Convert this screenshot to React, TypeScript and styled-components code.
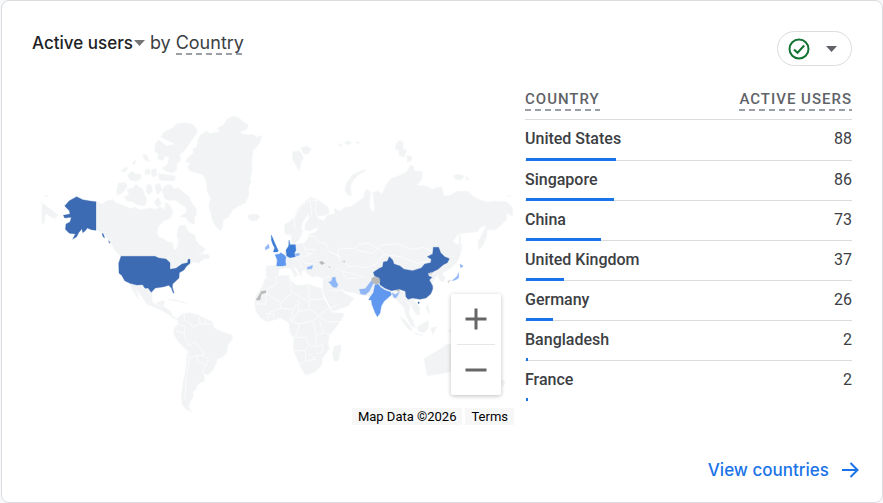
import React from "react";
import styled, { createGlobalStyle } from "styled-components";

const GlobalStyle = createGlobalStyle`
  *, *::before, *::after { box-sizing: border-box; }
  body {
    margin: 0;
    background: #f8f9fa;
    color: #3c4043;
    font-family: Roboto, "Liberation Sans", sans-serif;
  }
  button { font: inherit; color: inherit; background: none; border: 0; padding: 0; cursor: pointer; }
`;

const Card = styled.section`
  display: flex;
  flex-direction: column;
  min-height: 100vh;
  margin-left: 1px;
  background: #fff;
  border: 1px solid #dadce0;
  border-radius: 8px;
`;

const Header = styled.header`
  display: flex;
  justify-content: space-between;
  align-items: flex-start;
  padding: 30px 30px 0;
`;

const Title = styled.h2`
  display: flex;
  align-items: baseline;
  margin: 0;
  font: 400 18px/24px Inter, Roboto, sans-serif;
`;

const MetricButton = styled.button`
  display: flex;
  align-items: center;
  gap: 1px;
  color: #202124;
  font-size: 17px;
  font-weight: 500;
`;

const dashes = (color: string) => `
  background-image: repeating-linear-gradient(90deg, ${color} 0 6px, transparent 6px 10px);
  background-repeat: no-repeat;
  background-position: left bottom;
  background-size: 100% 2px;
`;

const Dimension = styled.span`
  ${dashes("#9aa0a6")}
`;

const By = styled.span`
  margin: 0 5px;
`;

const QualityButton = styled.button`
  display: flex;
  align-items: center;
  justify-content: space-between;
  width: 75px;
  height: 35px;
  padding: 0 14px 0 10px;
  border: 1px solid #dadce0;
  border-radius: 18px;
`;

const Body = styled.div`
  display: grid;
  grid-template-columns: minmax(0, 475fr) minmax(0, 327fr);
  gap: 10px;
  padding: 20px 30px 0 38px;
`;

const MapPanel = styled.div`
  position: relative;
  align-self: start;
  padding-top: 14px;
`;

const MapSvg = styled.svg`
  display: block;
  width: 100%;
`;

const ZoomControls = styled.div`
  position: absolute;
  right: 14px;
  bottom: 30px;
  width: 50px;
  padding: 0 6px;
  background: #fff;
  border-radius: 2px;
  box-shadow: 0 1px 4px rgba(0, 0, 0, 0.25);
`;

const ZoomButton = styled.button`
  display: flex;
  align-items: center;
  justify-content: center;
  width: 100%;
  height: 50px;

  & + & {
    height: 51px;
    border-top: 1px solid #e6e6e6;
  }
`;

const Attribution = styled.div`
  position: absolute;
  right: 1px;
  bottom: 0;
  display: flex;
  gap: 3px;
  color: #000;
  font-size: 13px;
  line-height: 17px;
`;

const AttributionItem = styled.span`
  padding: 0 6px;
  background: #f7f7f7;
`;

const TermsLink = styled.a`
  color: inherit;
  text-decoration: none;
`;

const Table = styled.table`
  width: 100%;
  align-self: start;
  border-collapse: separate;
  border-spacing: 0;
`;

const HeadCell = styled.th<{ $end?: boolean }>`
  height: 34px;
  padding: 0 0 8px;
  border-bottom: 1px solid #dadce0;
  color: #5f6368;
  font-size: 15px;
  font-weight: 500;
  line-height: 16px;
  letter-spacing: 1px;
  text-align: ${(p) => (p.$end ? "right" : "left")};
  vertical-align: bottom;
`;

const HeadLabel = styled.span`
  display: inline-block;
  padding-bottom: 4px;
  ${dashes("#9aa0a6")}
`;

const Row = styled.tr`
  position: relative;

  &:first-child > * { height: 41px; }
  &:last-child > * { border-bottom-color: transparent; }
`;

const NameCell = styled.th`
  height: 40px;
  padding: 0 0 2px;
  border-bottom: 1px solid #dadce0;
  font-size: 16px;
  font-weight: 500;
  line-height: 24px;
  text-align: left;
`;

const ValueCell = styled.td`
  height: 40px;
  padding: 0 0 2px;
  border-bottom: 1px solid #dadce0;
  font-size: 16px;
  line-height: 24px;
  text-align: right;
`;

const Bar = styled.span`
  position: absolute;
  left: 1px;
  bottom: 0;
  height: 3px;
  background: #1a73e8;
`;

const Footer = styled.footer`
  display: flex;
  justify-content: flex-end;
  margin-top: auto;
  padding: 0 23px 20px;
`;

const ViewLink = styled.a`
  display: flex;
  align-items: center;
  gap: 13px;
  color: #1a73e8;
  font: 500 17px/24px Inter, Roboto, sans-serif;
  text-decoration: none;
`;

const rows = [
  { country: "United States", users: 88 },
  { country: "Singapore", users: 86 },
  { country: "China", users: 73 },
  { country: "United Kingdom", users: 37 },
  { country: "Germany", users: 26 },
  { country: "Bangladesh", users: 2 },
  { country: "France", users: 2 },
];
const totalUsers = 320;

const Caret = ({ color = "#757575", width = 11, height = 6 }) => (
  <svg width={width} height={height} viewBox="0 0 12 6" preserveAspectRatio="none" aria-hidden="true">
    <path d="M0 0h12L6 6z" fill={color} />
  </svg>
);

const land = [
  // Greenland and Iceland
  "M505 115L512 105 530 92 540 102 550 98 568 96 562 84 580 75 592 56 612 48 630 56 640 66 655 74 650 88 628 98 645 104 672 104 680 112 695 106 693 120 682 138 670 150 665 180 666 210 660 235 664 245 656 262 656 288 645 310 625 318 608 330 595 352 580 360 577 380 572 392 558 380 548 364 543 340 536 318 542 295 532 275 530 250 520 225 500 218 478 212 472 200 482 190 466 184 475 172 490 160 488 148 500 140z",
  "M652 348L662 343 680 342 690 350 682 360 668 364 658 358z",
  // Canadian Arctic
  "M392 112L402 95 428 84 440 72 465 68 490 73 503 92 498 104 480 128 465 150 450 162 452 180 440 192 440 210 428 218 408 214 396 204 412 194 418 172 405 168 398 182 382 176 386 162 374 155 376 132 385 120 398 128 410 138 436 132z",
  "M272 215L284 202 294 204 286 216zM292 226L306 214 318 222 332 222 334 236 318 244 300 240zM306 188L318 178 314 194zM338 162L350 166 362 186 344 180zM345 210L358 206 362 222 346 224zM364 208L378 206 380 228 366 230zM386 220L408 224 436 228 434 242 408 242 388 240z",
  "M265 250L286 247 292 258 280 276 264 286 259 276zM290 268L310 264 318 252 326 260 338 266 350 300 344 318 322 314 308 306 290 302 284 290 298 284zM350 256L362 252 368 274 356 284 348 276zM374 256L390 250 396 270 382 284z",
  "M396 270L406 256 422 254 432 266 446 264 464 280 478 290 484 306 498 326 500 346 492 350 494 372 478 368 466 352 450 350 470 336 468 322 448 310 436 300 420 302 404 296zM404 340L420 332 426 350 410 358zM372 306L386 292 394 312 384 322z",
  // North America mainland
  "M200 304L215 312 228 304 248 298 258 308 275 314 290 320 300 326 316 322 330 330 358 324 376 328 392 320 404 330 406 306 420 316 430 338 418 356 402 362 386 378 380 396 386 410 404 418 414 426 428 428 432 450 440 446 446 424 440 406 448 376 466 376 476 396 494 404 498 422 508 434 526 446 518 458 500 464 534 462 540 474 520 478 506 490 488 486 478 498 440 512 420 508 375 478 273 470 256 452 242 428 228 410 212 396 200 390z",
  "M298 548L340 556 366 576 366 602 374 614 388 604 404 602 400 618 410 626 422 634 426 646 440 656 432 656 414 642 396 632 374 622 350 612 338 594 318 566 326 598 308 572z",
  "M412 598L440 600 472 610 440 604zM30 306L38 310 58 324 72 336 84 346 74 356 58 348 46 340 44 366 36 374 36 306zM44 288L56 287 50 291z",
  // South America
  "M440 656L456 642 480 638 502 644 526 656 546 664 552 684 572 694 604 704 608 716 594 734 590 758 580 770 562 776 558 792 546 814 534 826 522 820 524 842 504 852 496 870 488 874 490 890 480 906 476 922 486 936 470 930 456 912 454 888 458 852 466 818 470 780 472 752 448 728 430 702 434 682 446 672z",
  // Africa and Madagascar
  "M704 538L740 528 778 526 782 542 800 556 816 556 834 552 862 562 872 564 880 590 896 622 906 638 942 640 934 660 918 682 898 706 894 730 898 746 878 774 874 796 856 816 826 826 812 800 800 772 790 750 792 716 780 696 776 666 750 654 710 666 690 652 678 634 674 612 678 588 696 562z",
  "M912 740L930 734 934 746 924 784 912 782 908 760z",
  // Svalbard, Franz Josef Land, Novaya Zemlya and Severnaya Zemlya
  "M788 154L802 156 802 148 814 160 820 174 814 184 812 200 806 212 798 196 788 180zM812 144L828 138 844 146 834 162 822 162zM924 134L936 130 934 140zM944 128L956 122 966 130 950 134zM976 126L992 126 982 132z",
  "M944 270L950 248 966 226 986 216 1004 208 1006 214 986 224 970 240 962 258 964 288 952 284z",
  "M1098 130L1110 120 1120 126 1118 144 1130 152 1122 172 1108 166 1106 150 1096 148zM1130 168L1144 168 1146 180 1132 188zM1270 228L1284 222 1302 228 1294 240 1276 238zM1306 230L1320 238 1310 240zM1432 288L1444 288 1440 291z",
  // Scandinavia
  "M764 374L792 354 806 322 826 304 842 292 864 300 894 322 898 338 882 346 864 348 864 366 860 382 838 394 824 388 826 370 838 356 834 340 828 352 818 366 814 384 818 394 808 418 796 430 786 432 784 406 764 402z",
  // Eurasia
  "M835 405L862 392 862 356 882 362 892 344 914 342 914 324 928 334 946 322 966 318 982 306 1002 292 1004 276 1012 268 1022 276 1018 320 1030 338 1034 322 1028 280 1042 272 1056 282 1070 252 1082 236 1104 228 1126 218 1134 210 1140 196 1150 198 1154 214 1176 214 1176 236 1160 256 1186 258 1208 268 1222 262 1236 262 1242 288 1260 286 1282 274 1314 274 1330 290 1350 300 1370 306 1398 304 1430 306 1448 324 1448 350 1430 338 1430 360 1412 376 1396 390 1372 388 1370 408 1358 438 1346 450 1344 426 1362 392 1368 376 1352 382 1342 396 1310 398 1286 402 1268 424 1280 432 1296 434 1292 462 1280 488 1260 506 1236 520 1246 534 1240 546 1228 540 1222 524 1208 544 1196 590 1150 600 1168 620 1170 644 1158 644 1146 622 1142 608 1136 640 1148 660 1156 684 1142 676 1128 646 1120 620 1100 600 1070 580 1050 590 1026 590 988 584 972 578 942 574 930 560 942 580 956 586 972 596 954 618 908 634 892 602 878 574 880 534 860 528 848 532 830 520 828 508 816 512 814 530 802 508 786 498 804 524 794 532 782 504 764 504 748 508 742 534 722 538 710 534 708 498 738 496 738 476 766 456 778 438 778 420 786 434 820 430 832 420z",
  // South-East Asia
  "M1110 648L1132 668 1148 692 1138 690 1122 672zM1152 698L1180 706 1162 704zM1162 680L1178 670 1196 662 1194 686 1182 698 1166 694zM1202 684L1220 680 1208 704zM1192 612L1200 634 1196 642 1188 624zM1252 688L1276 692 1300 708 1270 704zM1288 398L1292 402 1292 448 1286 442z",
  // Australia and New Zealand
  "M1182 776L1206 762 1230 748 1248 734 1266 732 1284 742 1298 728 1330 752 1344 790 1334 826 1310 838 1290 820 1262 816 1224 822 1192 828zM1414 838L1426 846 1418 860z",
];

const borders = [
  // South America
  "M462 642L464 662 484 672 486 682 508 672 546 672M508 650L510 672M526 658L526 674M446 674L466 680 462 700 440 694M462 700L466 716 474 728 474 738 498 724 502 738 520 752 520 768 500 766 478 774 472 752M500 766L504 784 530 796 536 778 520 764M530 796L518 812 522 820M478 774L470 830 464 900",
  // Africa
  "M736 528L740 552 708 570M776 528L782 552 784 576 836 606M836 554L838 624M838 598L884 598M708 572L708 612 676 612M708 578L752 608 784 580M752 608L752 624 720 636 710 664M752 624L790 628 800 612M790 628L780 664M804 598L806 634 784 664M806 634L840 628 866 646 898 624M784 664L808 672 850 662 866 646 892 666 934 664M808 672L800 704 790 710 830 714 836 736 858 740 858 704 850 664M858 704L880 700M868 664L880 694 898 706M836 736L826 752 792 752M826 752L828 784 808 794M836 758L858 778 830 782M858 740L880 730 876 756 858 762M704 642L730 640M730 640L732 664",
  // Europe and Asia
  "M794 388L794 350 812 320 840 300 846 352M840 300L862 302 856 330 864 352M832 408L852 408 862 424 890 434 896 454 930 470 928 484M820 434L830 462 850 460M798 440L800 462 820 470 850 460M810 472L826 490 848 492M786 472L806 482 816 504M828 448L858 448M930 478L922 466 928 444 974 446 984 434 1014 428 1044 446 1064 460 1032 498M920 504L934 514 966 520 1002 532M944 486L956 500 980 498 1010 504 1034 492M882 534L900 528M940 518L946 536 986 534M900 572L942 572M904 622L930 612M978 450L1030 460 1050 436 1100 430 1140 448 1180 442 1206 454M1062 464L1110 470 1160 490 1196 484M1128 604L1146 618M1170 600L1184 620",
  // Central America
  "M384 614L404 620M372 602L382 620",
];

const shaded: { color: string; d: string }[] = [
  {
    color: "#3d6bb3",
    d: "M104 318L118 302 140 290 158 299 180 303 198 305 198 391 184 389 172 384 166 392 158 398 156 386 146 398 140 410 128 418 136 402 118 400 106 388 108 372 120 366 124 352 104 354 100 346 120 342 118 332zM216 400L220 402 224 414 219 410zM236 422L240 428 238 430zM273 469L375 469 386 474 408 477 420 488 420 508 438 505 456 492 473 488 474 478 480 478 480 490 470 498 462 510 448 518 447 534 428 552 427 562 432 578 430 580 424 564 416 556 402 560 392 562 376 564 364 577 354 564 345 565 338 554 320 555 300 550 284 542 275 526 267 520 266 490z",
  },
  {
    color: "#3d6bb3",
    d: "M1030 517L1046 506 1058 500 1060 486 1072 484 1078 470 1088 480 1092 492 1110 498 1122 508 1148 512 1174 504 1184 492 1202 488 1204 478 1192 470 1208 462 1210 442 1226 442 1232 458 1244 470 1258 476 1252 488 1240 494 1224 508 1212 514 1202 520 1194 518 1196 528 1206 532 1198 540 1208 558 1208 568 1202 582 1188 594 1170 598 1148 594 1134 598 1128 590 1126 574 1108 568 1084 572 1064 564 1050 554 1046 534 1034 528zM1164 606L1168 606 1167 611 1164 610z",
  },
  { color: "#3c7bd6", d: "M724 405L728 414 734 428 740 442 745 452 742 456 730 456 734 444 728 432 724 420zM777 420L779 430 779 434 790 434 796 434 798 450 793 460 796 470 780 473 770 468 768 450 776 438z" },
  { color: "#6198ef", d: "M735 464L748 462 752 458 764 466 768 472 766 484 768 496 758 498 740 498 742 480zM1020 592L1030 578 1035 554 1044 552 1052 562 1064 570 1082 576 1084 584 1076 592 1062 604 1054 618 1050 640 1042 650 1036 640 1026 614 1024 600 1016 600z" },
  { color: "#8fb6f6", d: "M706 442L716 432 718 444 706 450zM794 462L806 460 810 465 798 468zM832 502L848 496 846 506 832 508zM896 546L904 544 908 532 916 532 918 544 924 554 920 562 910 562zM988 568L1006 566 1018 550 1028 538 1034 544 1026 558 1018 574 1006 584 992 582zM1086 578L1096 584 1108 576 1100 592 1092 594zM1290 492L1300 498 1292 504zM1286 518L1286 534 1276 540 1266 542 1280 530z" },
  { color: "#b9b9b9", d: "M678 600L686 588 694 574 708 572 708 578 694 582 690 600zM868 486L876 484 884 490 874 494zM1024 536L1032 530 1048 534 1050 546 1040 554 1028 548zM1098 572L1110 568 1108 574z" },
  { color: "#d3d4d5", d: "M936 484L946 482 944 488zM896 498L902 502 898 504zM1252 544L1262 540 1256 548zM1196 522L1204 516 1204 524z" },
];

const WorldMap = () => (
  <MapSvg viewBox="30 0 1425 975" role="img" aria-label="Active users by country">
    {land.map((d, i) => (
      <path key={i} d={d} fill="#f1f3f4" stroke="#f5f7f8" strokeWidth="2" strokeLinejoin="round" />
    ))}
    {borders.map((d, i) => (
      <path key={i} d={d} fill="none" stroke="#fcfcfd" strokeWidth="3" strokeLinejoin="round" />
    ))}
    <path d="M1046 566L1064 572 1084 576 1106 568 1126 574" fill="none" stroke="#fff" strokeWidth="6" />
    {shaded.map((s, i) => (
      <path key={i} d={s.d} fill={s.color} stroke={s.color} strokeWidth="1" strokeLinejoin="round" />
    ))}
  </MapSvg>
);

export default function App() {
  return (
    <>
      <GlobalStyle />
      <Card>
        <Header>
          <Title>
            <MetricButton type="button">
              Active users
              <Caret />
            </MetricButton>
            <By>by</By>
            <Dimension>Country</Dimension>
          </Title>
          <QualityButton type="button" aria-label="Data quality">
            <svg width="22" height="22" viewBox="0 0 22 22" fill="none" stroke="#137333" strokeWidth="2" aria-hidden="true">
              <circle cx="11" cy="11" r="9.5" />
              <path d="M6 11.5l3.5 3.3 6.7-7.3" />
            </svg>
            <Caret color="#5f6368" />
          </QualityButton>
        </Header>
        <Body>
          <MapPanel>
            <WorldMap />
            <ZoomControls>
              <ZoomButton type="button" aria-label="Zoom in">
                <svg width="22" height="22" viewBox="0 0 22 22" aria-hidden="true">
                  <path d="M.5 9.5h9v-9h3v9h9v3h-9v9h-3v-9h-9z" fill="#666" />
                </svg>
              </ZoomButton>
              <ZoomButton type="button" aria-label="Zoom out">
                <svg width="22" height="4" viewBox="0 0 22 4" aria-hidden="true">
                  <path d="M.5 .5h21v3H.5z" fill="#666" />
                </svg>
              </ZoomButton>
            </ZoomControls>
            <Attribution>
              <AttributionItem>Map Data ©2026</AttributionItem>
              <AttributionItem>
                <TermsLink href="#terms">Terms</TermsLink>
              </AttributionItem>
            </Attribution>
          </MapPanel>
          <Table>
            <thead>
              <tr>
                <HeadCell scope="col">
                  <HeadLabel>COUNTRY</HeadLabel>
                </HeadCell>
                <HeadCell scope="col" $end>
                  <HeadLabel>ACTIVE USERS</HeadLabel>
                </HeadCell>
              </tr>
            </thead>
            <tbody>
              {rows.map((row) => (
                <Row key={row.country}>
                  <NameCell scope="row">
                    {row.country}
                    <Bar style={{ width: `${(row.users / totalUsers) * 100}%` }} />
                  </NameCell>
                  <ValueCell>{row.users}</ValueCell>
                </Row>
              ))}
            </tbody>
          </Table>
        </Body>
        <Footer>
          <ViewLink href="#countries">
            View countries
            <svg width="17" height="16" viewBox="0 0 17 16" fill="none" stroke="currentColor" strokeWidth="2" aria-hidden="true">
              <path d="M0 8h15M8.5 1l7 7-7 7" />
            </svg>
          </ViewLink>
        </Footer>
      </Card>
    </>
  );
}
